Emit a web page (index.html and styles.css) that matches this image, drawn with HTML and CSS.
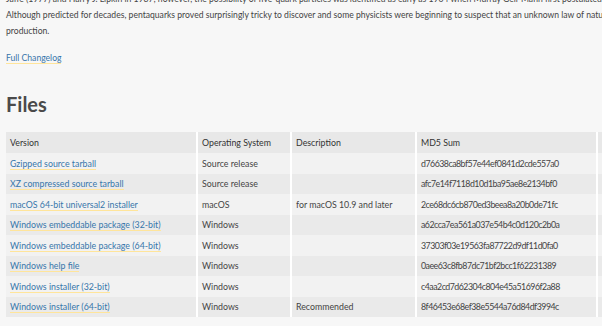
FILE: index.html
```html
<!DOCTYPE html>
<html lang="en">
<head>
  <meta charset="UTF-8" />
  <meta name="viewport" content="width=device-width, initial-scale=1.0"/>
  <title>Python Release</title>
  <link rel="stylesheet" href="styles.css">
</head>
<body>
  <div class="content">
    <article class="release">
      <p class="intro">Jaffe (1977) and Harry J. Lipkin in 1987; however, the possibility of five-quark particles was identified as early as 1964 when Murray Gell-Mann first postulated the existence of quarks. Although predicted for decades, pentaquarks proved surprisingly tricky to discover and some physicists were beginning to suspect that an unknown law of nature prevented their production.</p>

      <p class="changelog"><a href="#">Full Changelog</a></p>

      <h1>Files</h1>

      <table class="files">
        <thead>
          <tr>
            <th class="col-version">Version</th>
            <th class="col-os">Operating System</th>
            <th class="col-desc">Description</th>
            <th class="col-md5">MD5 Sum</th>
            <th class="col-size">File Size</th>
          </tr>
        </thead>
        <tbody>
          <tr>
            <td><a href="#">Gzipped source tarball</a></td>
            <td>Source release</td>
            <td></td>
            <td class="md5">d76638ca8bf57e44ef0841d2cde557a0</td>
            <td>25372998</td>
          </tr>
          <tr>
            <td><a href="#">XZ compressed source tarball</a></td>
            <td>Source release</td>
            <td></td>
            <td class="md5">afc7e14f7118d10d1ba95ae8e2134bf0</td>
            <td>19106836</td>
          </tr>
          <tr>
            <td><a href="#">macOS 64-bit universal2 installer</a></td>
            <td>macOS</td>
            <td>for macOS 10.9 and later</td>
            <td class="md5">2ce68dc6cb870ed3beea8a20b0de71fc</td>
            <td>40865361</td>
          </tr>
          <tr>
            <td><a href="#">Windows embeddable package (32-bit)</a></td>
            <td>Windows</td>
            <td></td>
            <td class="md5">a62cca7ea561a037e54b4c0d120c2b0a</td>
            <td>7615330</td>
          </tr>
          <tr>
            <td><a href="#">Windows embeddable package (64-bit)</a></td>
            <td>Windows</td>
            <td></td>
            <td class="md5">37303f03e19563fa87722d9df11d0fa0</td>
            <td>8591256</td>
          </tr>
          <tr>
            <td><a href="#">Windows help file</a></td>
            <td>Windows</td>
            <td></td>
            <td class="md5">0aee63c8fb87dc71bf2bcc1f62231389</td>
            <td>9356525</td>
          </tr>
          <tr>
            <td><a href="#">Windows installer (32-bit)</a></td>
            <td>Windows</td>
            <td></td>
            <td class="md5">c4aa2cd7d62304c804e45a51696f2a88</td>
            <td>27750096</td>
          </tr>
          <tr>
            <td><a href="#">Windows installer (64-bit)</a></td>
            <td>Windows</td>
            <td>Recommended</td>
            <td class="md5">8f46453e68ef38e5544a76d84df3994c</td>
            <td>28916488</td>
          </tr>
        </tbody>
      </table>
    </article>
  </div>
</body>
</html>
```

FILE: styles.css
```css
* {
  box-sizing: border-box;
}

body {
  margin: 0;
  background-color: #f7f7f7;
  color: #444;
  font-family: Lato, 'Open Sans', sans-serif;
  overflow: hidden;
}

.content {
  width: 700px;
  padding: 0 6px;
  margin-top: -9px;
}

a {
  color: #3776ab;
  text-decoration: none;
  border-bottom: 1px solid #ffe59b;
}

.intro {
  margin: 0;
  font-size: 8.6px;
  line-height: 16px;
}

.changelog {
  margin: 11px 0 0;
  font-size: 8.6px;
  line-height: 16px;
}

h1 {
  margin: 26px 0 16px;
  font-size: 20px;
  line-height: 24px;
  font-weight: bold;
  color: #4a4a4a;
}

/* download table */
.files {
  border-collapse: collapse;
  font-size: 8.8px;
  width: 690px;
}

.files th,
.files td {
  text-align: left;
  padding: 0 4px;
  height: 20.5px;
  border-left: 2px solid #fff;
  white-space: nowrap;
}

.files th:first-child,
.files td:first-child {
  border-left: none;
}

.files th {
  background-color: #e8e8e8;
  color: #333;
  font-weight: normal;
  height: 21px;
}

.files tbody tr:nth-child(odd) td {
  background-color: #f2f2f2;
}

.files tbody tr:nth-child(even) td {
  background-color: #eaeaea;
}

.files .md5 {
  letter-spacing: -0.5px;
}

.col-version { width: 191px; }
.col-os { width: 94px; }
.col-desc { width: 125px; }
.col-md5 { width: 181px; }
```
